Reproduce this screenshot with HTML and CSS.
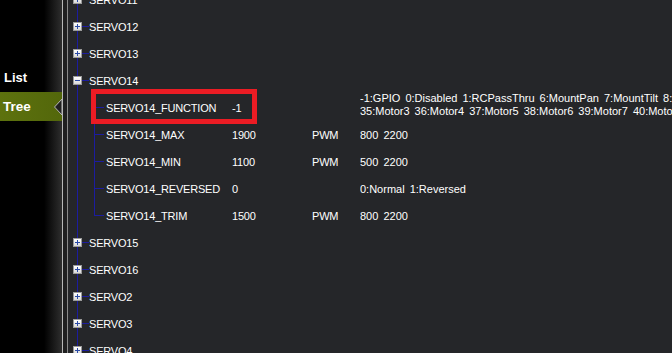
FILE: index.html
```html
<!DOCTYPE html>
<html lang="en">

<head>
    <meta charset="UTF-8">
    <meta name="viewport" content="width=device-width, initial-scale=1.0">
    <title>Full Parameter Tree</title>
    <link rel="stylesheet" href="styles.css">
</head>

<body>
    <div class="side">
        <div class="side-item">List</div>
        <div class="side-item active">
            <span>Tree</span>
            <svg class="notch" width="8" height="16" viewBox="0 0 8 16">
                <polygon points="8,0 0.5,8 8,16" fill="#202020" stroke="#b8b8b8" stroke-width="1"/>
            </svg>
        </div>
    </div>
    <div class="divider"></div>

    <div class="tree">
        <div class="node"><span class="box plus"></span><span class="link"></span><span class="label">SERVO11</span></div>
        <div class="node"><span class="box plus"></span><span class="link"></span><span class="label">SERVO12</span></div>
        <div class="node"><span class="box plus"></span><span class="link"></span><span class="label">SERVO13</span></div>
        <div class="node"><span class="box minus"></span><span class="link"></span><span class="label">SERVO14</span></div>

        <div class="children">
            <div class="param">
                <span class="link child-link"></span>
                <span class="name">SERVO14_FUNCTION</span>
                <span class="value">-1</span>
                <span class="units"></span>
                <span class="options multi">-1:GPIO 0:Disabled 1:RCPassThru 6:MountPan 7:MountTilt 8:MountRoll 9:MountOpen 10:CameraTrigger<br>35:Motor3 36:Motor4 37:Motor5 38:Motor6 39:Motor7 40:Motor8 41:MotorTilt</span>
            </div>
            <div class="param">
                <span class="link child-link"></span>
                <span class="name">SERVO14_MAX</span>
                <span class="value">1900</span>
                <span class="units">PWM</span>
                <span class="options">800 2200</span>
            </div>
            <div class="param">
                <span class="link child-link"></span>
                <span class="name">SERVO14_MIN</span>
                <span class="value">1100</span>
                <span class="units">PWM</span>
                <span class="options">500 2200</span>
            </div>
            <div class="param">
                <span class="link child-link"></span>
                <span class="name">SERVO14_REVERSED</span>
                <span class="value">0</span>
                <span class="units"></span>
                <span class="options">0:Normal 1:Reversed</span>
            </div>
            <div class="param">
                <span class="link child-link"></span>
                <span class="name">SERVO14_TRIM</span>
                <span class="value">1500</span>
                <span class="units">PWM</span>
                <span class="options">800 2200</span>
            </div>
        </div>

        <div class="node"><span class="box plus"></span><span class="link"></span><span class="label">SERVO15</span></div>
        <div class="node"><span class="box plus"></span><span class="link"></span><span class="label">SERVO16</span></div>
        <div class="node"><span class="box plus"></span><span class="link"></span><span class="label">SERVO2</span></div>
        <div class="node"><span class="box plus"></span><span class="link"></span><span class="label">SERVO3</span></div>
        <div class="node"><span class="box plus"></span><span class="link"></span><span class="label">SERVO4</span></div>

        <div class="highlight"></div>
    </div>
</body>

</html>
```

FILE: styles.css
```css
body {
    margin: 0;
    padding: 0;
    display: flex;
    height: 353px;
    overflow: hidden;
    background-color: #252629;
    font-family: "Liberation Sans", Arial, sans-serif;
    color: #ffffff;
}

.side {
    width: 62px;
    flex-shrink: 0;
    padding-top: 62px;
    background: linear-gradient(to right, #000 0, #000 44px, #2e2e2e 62px);
}

.side-item {
    height: 30px;
    display: flex;
    align-items: center;
    padding-left: 4px;
    font-size: 13px;
    font-weight: bold;
}

.side-item.active {
    height: 29px;
    padding-left: 3px;
    font-size: 13.5px;
    justify-content: space-between;
    background: linear-gradient(to right, #5d720e, #53670b);
}

.notch {
    display: block;
}

.divider {
    width: 4px;
    flex-shrink: 0;
    background-color: #1f1f20;
    border-left: 1px solid #b8b8b8;
    border-right: 1px solid #8a8a8a;
}

.tree {
    flex: 1;
    position: relative;
    margin-top: -14px;
    font-size: 11px;
    letter-spacing: -0.2px;
    overflow: hidden;
}

/* main tree line */
.tree::before {
    content: "";
    position: absolute;
    left: 9px;
    top: 0;
    bottom: 0;
    border-left: 1px solid #1c1ca0;
}

.node,
.param {
    height: 27px;
    display: flex;
    align-items: center;
    white-space: nowrap;
}

.box {
    position: relative;
    z-index: 1;
    width: 7px;
    height: 7px;
    margin-left: 5px;
    border: 1px solid #9a9a9a;
    background: linear-gradient(#ffffff, #d8d8d8);
}

.box::before,
.box::after {
    content: "";
    position: absolute;
    background-color: #2a4aa6;
}

.box::before {
    left: 1px;
    top: 3px;
    width: 5px;
    height: 1px;
}

.plus::after {
    left: 3px;
    top: 1px;
    width: 1px;
    height: 5px;
}

.link {
    width: 7px;
    border-top: 1px solid #1c1ca0;
}

.children {
    position: relative;
}

.children::before {
    content: "";
    position: absolute;
    left: 26px;
    top: 0;
    bottom: 13px;
    border-left: 1px solid #1c1ca0;
}

.child-link {
    width: 10px;
    margin-left: 26px;
    margin-right: 2px;
}

.name {
    width: 126px;
}

.value {
    width: 80px;
}

.units {
    width: 48px;
}

.options {
    flex: 1;
    overflow: hidden;
    letter-spacing: 0;
    word-spacing: 2px;
}

.options.multi {
    align-self: flex-start;
    line-height: 13px;
    margin-top: -2px;
}

.highlight {
    position: absolute;
    left: 23px;
    top: 103px;
    width: 156px;
    height: 25px;
    border: 5px solid #ec1c24;
}
```
